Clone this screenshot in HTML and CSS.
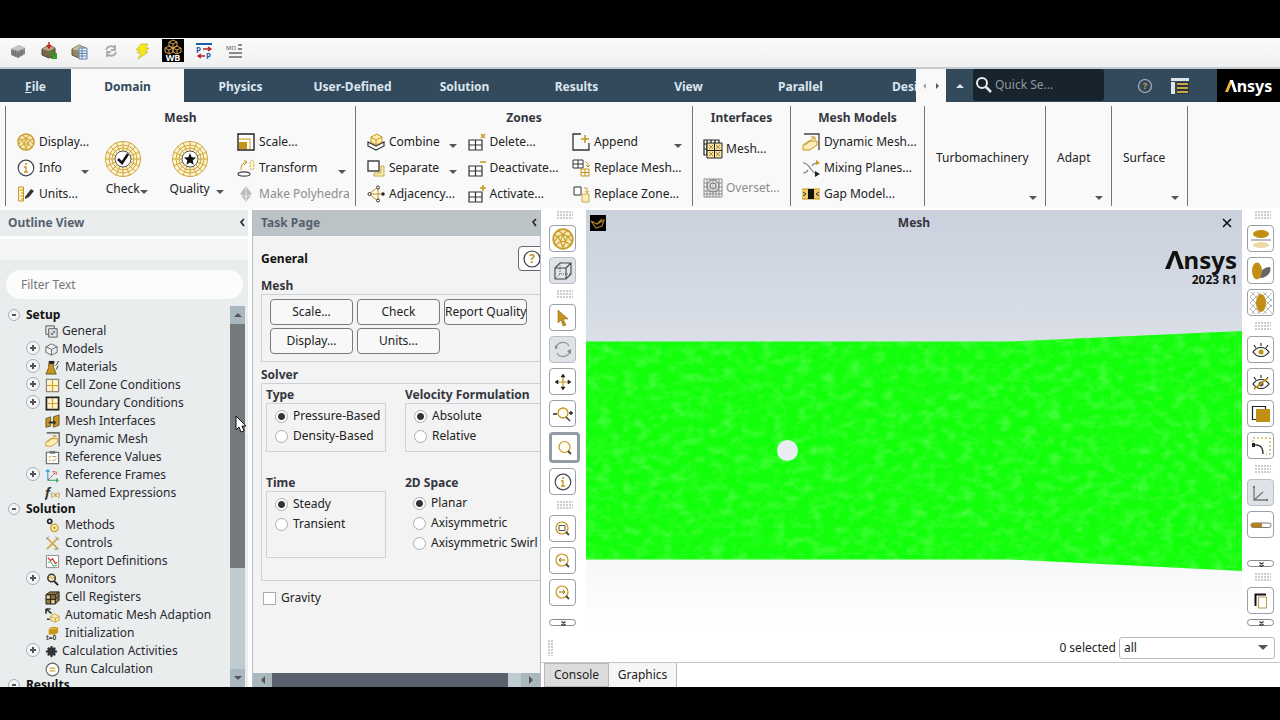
FILE: index.html
```html
<!DOCTYPE html>
<html lang="en">
<head>
<meta charset="utf-8">
<title>Fluent</title>
<link rel="stylesheet" href="styles.css">
</head>
<body>
<svg class="defs" aria-hidden="true">
  <defs>
    <symbol id="cube" viewBox="0 0 18 18"><path d="M2 7l8-4 6 3v6l-7 4-7-3z" fill="#8a8a8a"/><path d="M2 7l8-4 6 3-7 3z" fill="#c4c4c4"/><path d="M9 9v7M4.500 8v6M6.500 8.500v6.500M2 10l7 3 7-4M12 8v6" stroke="#666" fill="none" stroke-width=".7"/></symbol>
    <symbol id="cube-in" viewBox="0 0 18 18"><path d="M2 7l7-4 6 3v7l-6 3-7-3z" fill="#75684b" stroke="#4d4432"/><path d="M2 7l7-4 6 3-6 3z" fill="#b8aa80"/><path d="M9 0v5M7 3l2 3 2-3" stroke="#c22" stroke-width="1.500" fill="none"/><path d="M10 10l5 5M16 11v5h-5" stroke="#3a9d23" stroke-width="2" fill="none"/></symbol>
    <symbol id="cube-doc" viewBox="0 0 18 18"><path d="M1 7l7-4 7 3v7l-7 3-7-3z" fill="#938766" stroke="#5c543f"/><path d="M1 7l7-4 7 3-7 3z" fill="#c7bb92"/><path d="M8 6h8v11H8z" fill="#e8f1fa" stroke="#5c83ad"/><path d="M8 9h8M8 11.500h8M8 14h8M11 6v11" stroke="#5c83ad"/></symbol>
    <symbol id="refresh" viewBox="0 0 18 18"><path d="M4 8c1-4 6-5 9-2V3M13 3v5H9M14 10c-1 4-6 5-9 2v3M5 15v-5h4" stroke="#aaa" stroke-width="1.800" fill="none"/></symbol>
    <symbol id="bolt" viewBox="0 0 18 18"><path d="M8 2h7l-3 4h4l-4 4h3L5 17l3-6H4l3-3H3z" fill="#f5ea18" stroke="#b5ab22" stroke-width=".6"/></symbol>
    <symbol id="wb" viewBox="0 0 22 23"><path d="M0 0h22v23H0z" fill="#000"/><g stroke="#d8a14c" fill="none"><path d="M11 1l4 2v4l-4 2-4-2V3zM7 3l4 2 4-2M11 5v4M7 7l4 2v4l-4 2-4-2V9zM15 7l4 2v4l-4 2-4-2V9zM3 9l4 2 4-2 4 2 4-2M7 11v4M15 11v4"/></g><text x="11" y="22" text-anchor="middle" font-size="9" font-weight="700" fill="#fff">WB</text></symbol>
    <symbol id="pp" viewBox="0 0 18 18"><path d="M1 2h16" stroke="#1c5fae" stroke-width="2"/><path d="M8 7h8M13 5l3 2-3 2M10 14H3M6 12l-3 2 3 2" stroke="#b21f2d" stroke-width="1.300" fill="none"/><text x="1" y="11" font-size="8" font-weight="700" fill="#1c5fae">P</text><text x="11" y="17" font-size="8" font-weight="700" fill="#1c5fae">P</text></symbol>
    <symbol id="mo" viewBox="0 0 18 18"><text x="0" y="8" font-size="6" fill="#555">MO</text><path d="M12 3h4M12 7h4M3 11h13M3 15h13" stroke="#666" stroke-width="1.300"/></symbol>

    <symbol id="mesh-ball" viewBox="0 0 18 18"><circle cx="9" cy="9" r="8" fill="#f6e7b4" stroke="#c89b25" stroke-width="1.400"/><path d="M5 2l4 3 4-3M2 6l3 1 4-2 4 2 3-1M5 7L2 11M5 7l2 4 4 0 2-4 3 4M7 11l-4 3M7 11l2 5 2-5 4 3M9 5l-2 6M9 5l2 6" fill="none" stroke="#c89b25" stroke-width=".9"/></symbol>
    <symbol id="info" viewBox="0 0 18 18"><circle cx="9" cy="9" r="7.800" fill="#fff" stroke="#46494c" stroke-width="1.200"/><path d="M7 8h2v5M7 13h4" stroke="#c4961a" stroke-width="1.300" fill="none"/><circle cx="9" cy="5" r="1" fill="#c4961a"/></symbol>
    <symbol id="units" viewBox="0 0 18 18"><path d="M1.500 2h5v14h-5zM3 5h3M4 8h2M3 11h3M4 14h2" fill="#fff5cf" stroke="#c4961a"/><path d="M8 12l6-8 3 2-5 6-4 2z" fill="#333"/></symbol>
    <symbol id="wheel" viewBox="0 0 38 38"><g fill="none" stroke="#cfa63a" stroke-width="1"><circle cx="19" cy="19" r="17.500" fill="#fdf3cf"/><circle cx="19" cy="19" r="14"/><circle cx="19" cy="19" r="11"/><path d="M19 1v36M1 19h36M6.500 6.500l25 25M31.500 6.500l-25 25M12 2.500l14 33M26 2.500l-14 33M2.500 12l33 14M2.500 26l33-14"/></g><circle cx="19" cy="19" r="8" fill="#fff" stroke="#555"/></symbol>
    <symbol id="scale" viewBox="0 0 18 18"><path d="M1 1h16v16H1z" fill="#fff" stroke="#222" stroke-width="1.400"/><path d="M2 6h11v10" stroke="#d6b75e" fill="none" stroke-width="1.300"/><path d="M2 9h8v7H2z" fill="#c4961a"/></symbol>
    <symbol id="transform" viewBox="0 0 18 18"><ellipse cx="7" cy="15" rx="6" ry="2.200" fill="none" stroke="#444" stroke-width="1.200"/><path d="M4 11c0-4 1-7 5-8M7 1l3 2-3 3" stroke="#c4961a" fill="none"/><ellipse cx="15" cy="6" rx="2" ry="5" fill="#fff5cf" stroke="#c9a84a" stroke-dasharray="2 1"/></symbol>
    <symbol id="poly" viewBox="0 0 18 18"><path d="M9 1l6 8-6 8-6-8z" fill="#b8b8b8"/><path d="M9 1v16M3 9l6 3 6-3" stroke="#eee" fill="none"/></symbol>
    <symbol id="combine" viewBox="0 0 18 18"><path d="M1 9l8 4 8-4v4l-8 4-8-4z" fill="#fff" stroke="#333" stroke-width="1.200"/><path d="M4 4l6-3 5 3v5l-6 3-5-3z" fill="#fcedb8" stroke="#c4961a"/><path d="M4 4l5 3 6-3M9 7v5" stroke="#c4961a" fill="none"/></symbol>
    <symbol id="separate" viewBox="0 0 18 18"><path d="M1 2h11v10H1z" fill="#fff" stroke="#444" stroke-width="1.400"/><path d="M14 7h3v10H7v-3h7z" fill="#fcedb8" stroke="#c9a84a"/></symbol>
    <symbol id="adjacency" viewBox="0 0 18 18"><path d="M2 9l9-7M2 9l9 7M11 2v14M2 9h14" stroke="#c4961a" fill="none"/><g fill="#fff" stroke="#333"><circle cx="11" cy="2.500" r="1.500"/><circle cx="2.500" cy="9" r="1.500"/><circle cx="11" cy="15.500" r="1.500"/></g><circle cx="16" cy="9" r="1.700" fill="#222"/></symbol>
    <symbol id="grid-x" viewBox="0 0 18 18"><path d="M1 7h13v10H1zM1 12h13M7.500 7v10" fill="#fff" stroke="#333" stroke-width="1.200"/><path d="M13 1l4 4M17 1l-4 4" stroke="#c4961a" stroke-width="1.500"/></symbol>
    <symbol id="grid-minus" viewBox="0 0 18 18"><path d="M1 7h13v10H1zM1 12h13M7.500 7v10" fill="#fff" stroke="#333" stroke-width="1.200"/><path d="M12 3h6" stroke="#c4961a" stroke-width="1.500"/></symbol>
    <symbol id="grid-plus" viewBox="0 0 18 18"><path d="M1 7h13v10H1zM1 12h13M7.500 7v10" fill="#fff" stroke="#333" stroke-width="1.200"/><path d="M12 3h6M15 0v6" stroke="#c4961a" stroke-width="1.500"/></symbol>
    <symbol id="append" viewBox="0 0 18 18"><path d="M9 1H1v16h16v-7" fill="none" stroke="#333" stroke-width="1.300"/><path d="M9 6h8M13 2v8" stroke="#c4961a" stroke-width="1.500"/></symbol>
    <symbol id="rep-mesh" viewBox="0 0 18 18"><path d="M1 1h10v8H1zM1 5h10M6 1v8" fill="#fff" stroke="#333"/><path d="M9 10h8v7H9zM9 13.500h8M13 10v7M13 3c3 0 3 2 3 4M14 6l2 2 2-2" fill="none" stroke="#c4961a"/></symbol>
    <symbol id="rep-zone" viewBox="0 0 18 18"><path d="M2 2h7v8H2z" fill="#fff" stroke="#333"/><path d="M10 9h7v8h-7zM12 3h3v5M13 6l2 2 2-2" fill="#fcedb8" stroke="#cba74a"/></symbol>
    <symbol id="if-mesh" viewBox="0 0 20 20"><path d="M1 1h15v15H1zM4 1v15M8 1v15M12 1v15M1 5h15M1 10h15" fill="none" stroke="#222" stroke-width="1.200"/><path d="M4 4h15v15H4z" fill="#f7e4a2" stroke="#222"/><path d="M4 11.500h15M11.500 4v15" stroke="#222"/><path d="M6 6l4 4M10 6l-4 4M13 6l4 4M17 6l-4 4M6 13l4 4M10 13l-4 4M13 13l4 4M17 13l-4 4" stroke="#a98a40"/></symbol>
    <symbol id="overset" viewBox="0 0 20 20"><path d="M1 1h18v18H1zM4 1v18M7 1v18M10 1v18M13 1v18M16 1v18M1 5h18M1 9h18M1 13h18M1 16h18" fill="none" stroke="#8b8b8b"/><circle cx="10" cy="8" r="6" fill="#ddd" fill-opacity=".6" stroke="#777"/><circle cx="10" cy="8" r="3" fill="none" stroke="#777"/></symbol>
    <symbol id="dynmesh" viewBox="0 0 18 18"><path d="M2 1h15v16" fill="none" stroke="#444" stroke-width="1.300"/><path d="M1 17v-5l6-4h8v4l-7 5zM3 12l9-7M9 4h4v3" fill="#fcedb8" stroke="#c4961a"/></symbol>
    <symbol id="mixing" viewBox="0 0 18 18"><path d="M1 4c8 0 7 11 15 11M1 14c3 0 4-1 5-3M10 7c1-2 3-3 6-3" stroke="#777" stroke-width="1.100" fill="none"/><path d="M14 1l4 3-4 2z" fill="#c4961a"/><path d="M13 12l5 3-5 3z" fill="#222"/></symbol>
    <symbol id="gap" viewBox="0 0 18 18"><path d="M0 4h18v10H0z" fill="#edcc6c"/><path d="M0 4h18M0 14h18" stroke="#c4961a"/><path d="M6 4h6v10H6z" fill="#111"/><path d="M1 7l3 2-3 2M17 7l-3 2 3 2" stroke="#333" fill="none"/></symbol>

    <symbol id="t-general" viewBox="0 0 16 16"><path d="M2 2h9v9H2z" fill="#e6e9ea" stroke="#555"/><path d="M5 5h9v9H5z" fill="#e6e9ea" stroke="#555"/><path d="M7 12l5-5M7 9l3 3M9 7l3 3" stroke="#666"/></symbol>
    <symbol id="t-models" viewBox="0 0 16 16"><path d="M2 5l6-3 6 3v6l-6 3-6-3zM2 5l6 3 6-3M8 8v6" fill="#eef0f1" stroke="#666"/></symbol>
    <symbol id="t-materials" viewBox="0 0 16 16"><path d="M1 15l3-7V4h5v4l3 7z" fill="#c4961a" stroke="#6b5a2a"/><path d="M4 1h6v3H4z" fill="#222"/><path d="M11 6l3-3M14 6l-2 4M13 2h2" stroke="#333"/></symbol>
    <symbol id="t-cell" viewBox="0 0 16 16"><path d="M1.500 1.500h13v13h-13z" fill="#fff3c9" stroke="#888" stroke-width="1.300"/><path d="M8 2v12M2 8h12" stroke="#d0a32e" stroke-width="1.300"/></symbol>
    <symbol id="t-boundary" viewBox="0 0 16 16"><path d="M1.500 1.500h13v13h-13z" fill="#fff3c9" stroke="#222" stroke-width="1.800"/><path d="M8 2v12M2 8h12" stroke="#d0a32e" stroke-width="1.300"/></symbol>
    <symbol id="t-interfaces" viewBox="0 0 16 16"><path d="M1 5l5-2v10l-5 1zM9 3l6-2v11l-6 2z" fill="#c4961a" stroke="#6b5a2a"/><path d="M4 8h5V6l3 3-3 3v-2H4z" fill="#333"/></symbol>
    <symbol id="t-refvalues" viewBox="0 0 16 16"><path d="M1.500 2.500h13v12h-13z" fill="#fff" stroke="#777" stroke-width="1.400"/><path d="M5 1h6v3H5z" fill="#777"/><path d="M4 7l1 1 2-2M8 7h4M8 11l1 1 3-3M4 11h2" stroke="#b4923a" fill="none"/></symbol>
    <symbol id="t-frames" viewBox="0 0 16 16"><path d="M3 13V2M1 4l2-2 2 2" stroke="#2aa7d8" fill="none" stroke-width="1.200"/><path d="M3 13l8-8M8 4h4v4" stroke="#c33" fill="none" stroke-dasharray="3 1"/><path d="M3 13h11M12 11l2 2-2 2" stroke="#2da44e" fill="none" stroke-width="1.200"/></symbol>
    <symbol id="t-fx" viewBox="0 0 16 16"><text x="0" y="12" font-size="14" font-style="italic" font-weight="700" fill="#333">f</text><text x="6" y="12" font-size="8" font-weight="700" fill="#c9a23c">(x)</text></symbol>
    <symbol id="t-methods" viewBox="0 0 16 16"><circle cx="5" cy="3.500" r="2.200" fill="none" stroke="#222" stroke-width="1.800"/><circle cx="10" cy="10.500" r="4" fill="#fbe9ae" stroke="#cda337" stroke-width="1.500"/><circle cx="10" cy="10.500" r="1.300" fill="#c4961a"/></symbol>
    <symbol id="t-controls" viewBox="0 0 16 16"><path d="M2 2l12 12M14 2L2 14" stroke="#d0ad55" stroke-width="2"/><path d="M1 3l3-2M11 1l4 3M10 14l4 0" stroke="#888"/></symbol>
    <symbol id="t-report" viewBox="0 0 16 16"><path d="M1.500 1.500h13v13h-13z" fill="#fff" stroke="#888"/><path d="M3 4l3 3 2-2 3 5 2-1" stroke="#c33" stroke-width="1.300" fill="none"/><path d="M3 9l3-1 3 5 4-1" stroke="#3a9d50" fill="none"/></symbol>
    <symbol id="t-monitors" viewBox="0 0 16 16"><circle cx="7" cy="6.500" r="4" fill="#f5e6b6" stroke="#333" stroke-width="1.600"/><path d="M10 10l4 4" stroke="#222" stroke-width="2"/><path d="M4 7l2-2 2 2 2-2" stroke="#c4961a" fill="none"/></symbol>
    <symbol id="t-registers" viewBox="0 0 16 16"><path d="M1 5l4-3h10v9l-4 4H1z" fill="#8e7740" stroke="#222"/><path d="M1 5h10v10M11 5l4-3M6 5v10M1 10h10l4-4" stroke="#222" fill="none"/><path d="M2 6h3v3H2zM7 11h3v3H7z" fill="#eedb9d"/></symbol>
    <symbol id="t-adapt" viewBox="0 0 16 16"><path d="M1 1h5M1 1v5M1 1l6 5M2 12h3" stroke="#333" stroke-width="1.700"/><path d="M6 9l4-3 5 3v4l-4 2-5-2zM6 9l5 2 4-2M11 11v4" fill="#fbe9ae" stroke="#cda337"/></symbol>
    <symbol id="t-init" viewBox="0 0 16 16"><path d="M4 3l3-2h7v6l-3 2H4z" fill="#c4961a"/><path d="M4 3h7l3-2" stroke="#f0ce6b" fill="none"/><text x="1" y="15" font-size="7" font-weight="700" fill="#444">t=0</text></symbol>
    <symbol id="t-calc" viewBox="0 0 16 16"><circle cx="8" cy="8" r="4.500" fill="#333"/><path d="M8 2v12M2 8h12M4 4l8 8M12 4l-8 8" stroke="#333" stroke-width="2"/></symbol>
    <symbol id="t-run" viewBox="0 0 16 16"><circle cx="8" cy="8" r="6.800" fill="#fff" stroke="#666" stroke-width="1.200"/><path d="M5 6.500h6M5 9.500h6" stroke="#d0a32e" stroke-width="1.400"/></symbol>

    <symbol id="v-box" viewBox="0 0 18 18"><path d="M1 6l5-5h11v11l-5 5H1zM1 6h11v11M12 6l5-5" fill="#e4e6e9" stroke="#444" stroke-width="1.100"/><path d="M6 1v11h11M6 12l-5 5" stroke="#555" stroke-dasharray="1 1" fill="none"/></symbol>
    <symbol id="v-pointer" viewBox="0 0 18 18"><path d="M4 1l10 9-5 0 3 6-3 1-2-6-3 3z" fill="#c4961a" stroke="#8a6a1d" stroke-width=".6"/></symbol>
    <symbol id="v-rotate" viewBox="0 0 18 18"><path d="M2 7a7 7 0 0 1 13-2M3 12a7 7 0 0 0 13-3" fill="none" stroke="#999" stroke-width="1.400"/><path d="M1 8V4l3 3zM17 8v5l-4-3z" fill="#888"/></symbol>
    <symbol id="v-pan" viewBox="0 0 18 18"><path d="M9 3v12M3 9h12" stroke="#c4961a" stroke-width="1.200"/><path d="M9 1l2 3h-4zM9 17l2-3h-4zM1 9l3-2v4zM17 9l-3-2v4z" fill="#222" stroke="#222" stroke-width=".6"/></symbol>
    <symbol id="v-zoompm" viewBox="0 0 22 18"><circle cx="11" cy="8" r="5" fill="#fffdf3" stroke="#c4961a" stroke-width="1.300"/><path d="M14 12l4 4" stroke="#444" stroke-width="1.600"/><path d="M1 9h4M17 8h4M19 6v4" stroke="#222" stroke-width="1.300"/></symbol>
    <symbol id="v-zoom" viewBox="0 0 18 18"><circle cx="8.500" cy="8" r="5.500" fill="#fffdf3" stroke="#c4961a" stroke-width="1.200"/><path d="M12 12l3 3" stroke="#444" stroke-width="1.800"/></symbol>
    <symbol id="v-zoomfit" viewBox="0 0 18 18"><circle cx="8" cy="8" r="6" fill="#fffdf3" stroke="#c4961a" stroke-width="1.200"/><path d="M12 12l3 3" stroke="#444" stroke-width="1.800"/><path d="M5 5.500h6v5H5z" fill="none" stroke="#555"/></symbol>
    <symbol id="v-zoomprev" viewBox="0 0 18 18"><circle cx="8" cy="8" r="6" fill="#fffdf3" stroke="#c4961a" stroke-width="1.200"/><path d="M12 12l3 3" stroke="#444" stroke-width="1.800"/><path d="M11 8H5M7 6L5 8l2 2" fill="none" stroke="#8a6a1d"/></symbol>
    <symbol id="v-zoomnext" viewBox="0 0 18 18"><circle cx="8" cy="8" r="6" fill="#fffdf3" stroke="#c4961a" stroke-width="1.200"/><path d="M12 12l3 3" stroke="#444" stroke-width="1.800"/><path d="M5 8h6M9 6l2 2-2 2" fill="none" stroke="#8a6a1d"/></symbol>
    <symbol id="v-mirror" viewBox="0 0 22 22"><ellipse cx="11" cy="6" rx="8" ry="4" fill="#c08f14"/><path d="M1 12h20" stroke="#777"/><ellipse cx="11" cy="17" rx="8" ry="3" fill="#ecd9a5"/></symbol>
    <symbol id="v-shadow" viewBox="0 0 22 22"><path d="M10 18c-2-5 3-11 10-11 2 4-2 11-10 11z" fill="#666"/><ellipse cx="7" cy="11" rx="5" ry="8.500" fill="#c08f14"/></symbol>
    <symbol id="v-hatch" viewBox="0 0 22 22"><path d="M0 5l5-5M0 11L11 0M0 17L17 0M1 22L22 1M7 22L22 7M13 22l9-9M0 17l5 5M0 11l11 11M0 5l17 17M1 0l21 21M7 0l15 15M13 0l9 9" stroke="#aaa" stroke-width=".8"/><ellipse cx="11" cy="11" rx="5" ry="9" fill="#c08f14"/></symbol>
    <symbol id="v-eye" viewBox="0 0 22 22"><path d="M3 13c4-6 12-6 16 0-4 6-12 6-16 0z" fill="#fff" stroke="#222" stroke-width="1.200"/><circle cx="11" cy="13" r="2.500" fill="#c08f14"/><path d="M11 4v3M4 6l2 3M18 6l-2 3" stroke="#222" stroke-width="1.100"/></symbol>
    <symbol id="v-noeye" viewBox="0 0 22 22"><path d="M3 13c4-6 12-6 16 0-4 6-12 6-16 0z" fill="#fff" stroke="#222" stroke-width="1.200"/><circle cx="11" cy="13" r="2.500" fill="#555"/><path d="M11 4v3M4 6l2 3M18 6l-2 3" stroke="#222" stroke-width="1.100"/><path d="M4 18L18 7" stroke="#c08f14" stroke-width="1.600"/></symbol>
    <symbol id="v-squares" viewBox="0 0 22 22"><path d="M2.500 3.500h13v13h-13z" fill="#fff" stroke="#222" stroke-width="1.200"/><path d="M6 6h14v13H6z" fill="#c08f14"/></symbol>
    <symbol id="v-curve" viewBox="0 0 22 22"><path d="M3 7V3h17v16h-4" fill="none" stroke="#c08f14" stroke-dasharray="2 2"/><path d="M3 10c7-1 10 2 10 9" fill="none" stroke="#222" stroke-width="1.300"/><path d="M2 8h3v4H2z" fill="#222"/></symbol>
    <symbol id="v-axes" viewBox="0 0 22 22"><path d="M4 5v13h13M4 18l9-8" fill="none" stroke="#777" stroke-width="1.300"/><circle cx="4" cy="5" r="1.200" fill="#777"/><circle cx="17" cy="18" r="1.200" fill="#777"/></symbol>
    <symbol id="v-slider" viewBox="0 0 22 22"><rect x="1" y="9" width="20" height="4.500" rx="2.200" fill="#fff" stroke="#777"/><path d="M3 9h9v4.500H3a2 2 0 0 1 0-4.500z" fill="#b08224"/></symbol>
    <symbol id="v-copy" viewBox="0 0 22 22"><path d="M5.500 16V4.500H16" fill="none" stroke="#111" stroke-width="2"/><path d="M8.500 7h8v11h-8z" fill="#fff" stroke="#b59a50"/></symbol>
    <symbol id="pill" viewBox="0 0 27 7"><path d="M11.500 1.500l2 1.500 2-1.500M11.500 4l2 1.500 2-1.500" fill="none" stroke="#333" stroke-width="1.300"/></symbol>
  </defs>
</svg>

<div class="app">
  <div class="quickbar">
    <button aria-label="Open"><svg><use href="#cube"/></svg></button>
    <button aria-label="Import"><svg><use href="#cube-in"/></svg></button>
    <button aria-label="Case data"><svg><use href="#cube-doc"/></svg></button>
    <button aria-label="Reload"><svg><use href="#refresh"/></svg></button>
    <button aria-label="Quick run"><svg><use href="#bolt"/></svg></button>
    <button class="wb" aria-label="Workbench"><svg><use href="#wb"/></svg></button>
    <button aria-label="Parameters"><svg><use href="#pp"/></svg></button>
    <button aria-label="Monitor"><svg><use href="#mo"/></svg></button>
  </div>

  <nav class="tabbar">
    <div class="tabs">
      <button class="tab tab-file"><u>F</u>ile</button>
      <button class="tab tab-active">Domain</button>
      <button class="tab">Physics</button>
      <button class="tab">User-Defined</button>
      <button class="tab">Solution</button>
      <button class="tab">Results</button>
      <button class="tab">View</button>
      <button class="tab">Parallel</button>
      <button class="tab">Design</button>
    </div>
    <div class="tab-scroll">
      <button class="arrow left dim" aria-label="Previous tabs"></button>
      <button class="arrow right" aria-label="More tabs"></button>
    </div>
    <button class="collapse" aria-label="Collapse ribbon"><span class="arrow up"></span></button>
    <label class="search">
      <svg viewBox="0 0 18 18"><circle cx="7" cy="7" r="5" fill="none" stroke="#e8edf0" stroke-width="2"/><path d="M11 11l5 5" stroke="#e8edf0" stroke-width="2.500"/></svg>
      <input type="text" placeholder="Quick Se..." aria-label="Quick search">
    </label>
    <div class="tab-tools">
      <button aria-label="Help"><svg viewBox="0 0 18 18"><circle cx="9" cy="9" r="6.500" fill="none" stroke="#a9b4bd" stroke-width="1.200"/><text x="9" y="12" text-anchor="middle" font-size="9" font-weight="700" fill="#c9a23c">?</text></svg></button>
      <button aria-label="Layout"><svg viewBox="0 0 18 18"><path d="M0 1h18v3H0zM0 5h4v12H0z" fill="#dfe6ea"/><path d="M6 5h12v12H6z" fill="#27343f"/><path d="M6 7h11M6 11h11M6 15h11" stroke="#c9a83f" stroke-width="2"/></svg></button>
    </div>
    <div class="brand"><svg viewBox="0 0 12 12"><path d="M0 12L5 0h3L3 12z" fill="#f5b82e"/><path d="M5 0h3l4 12H9z" fill="#fff"/></svg>nsys</div>
  </nav>

  <div class="ribbon">
    <section class="group g-mesh">
      <h2>Mesh</h2>
      <div class="cols">
        <div class="col">
          <button class="cmd"><svg><use href="#mesh-ball"/></svg>Display...</button>
          <button class="cmd"><svg><use href="#info"/></svg>Info<i class="arrow down"></i></button>
          <button class="cmd"><svg><use href="#units"/></svg>Units...</button>
        </div>
        <button class="big"><svg viewBox="0 0 38 38"><use href="#wheel" width="38" height="38"/><path d="M14 19l4 4 6-9" fill="none" stroke="#111" stroke-width="2.500"/></svg><span>Check<i class="arrow down"></i></span></button>
        <button class="big"><svg viewBox="0 0 38 38"><use href="#wheel" width="38" height="38"/><path d="M19 13l1.700 4.200 4.300.3-3.300 2.900 1 4.400-3.700-2.300-3.700 2.300 1-4.400-3.300-2.900 4.300-.3z" fill="#111"/></svg><span>Quality<i class="arrow down far"></i></span></button>
        <div class="col col-wide">
          <button class="cmd"><svg><use href="#scale"/></svg>Scale...</button>
          <button class="cmd"><svg><use href="#transform"/></svg>Transform<i class="arrow down"></i></button>
          <button class="cmd off" disabled><svg><use href="#poly"/></svg>Make Polyhedra</button>
        </div>
      </div>
    </section>
    <section class="group g-zones">
      <h2>Zones</h2>
      <div class="cols">
        <div class="col">
          <button class="cmd"><svg><use href="#combine"/></svg>Combine<i class="arrow down"></i></button>
          <button class="cmd"><svg><use href="#separate"/></svg>Separate<i class="arrow down"></i></button>
          <button class="cmd"><svg><use href="#adjacency"/></svg>Adjacency...</button>
        </div>
        <div class="col">
          <button class="cmd"><svg><use href="#grid-x"/></svg>Delete...</button>
          <button class="cmd"><svg><use href="#grid-minus"/></svg>Deactivate...</button>
          <button class="cmd"><svg><use href="#grid-plus"/></svg>Activate...</button>
        </div>
        <div class="col">
          <button class="cmd"><svg><use href="#append"/></svg>Append<i class="arrow down"></i></button>
          <button class="cmd"><svg><use href="#rep-mesh"/></svg>Replace Mesh...</button>
          <button class="cmd"><svg><use href="#rep-zone"/></svg>Replace Zone...</button>
        </div>
      </div>
    </section>
    <section class="group g-interfaces">
      <h2>Interfaces</h2>
      <div class="col two">
        <button class="cmd"><svg><use href="#if-mesh"/></svg>Mesh...</button>
        <button class="cmd off" disabled><svg><use href="#overset"/></svg>Overset...</button>
      </div>
    </section>
    <section class="group g-models">
      <h2>Mesh Models</h2>
      <div class="col">
        <button class="cmd"><svg><use href="#dynmesh"/></svg>Dynamic Mesh...</button>
        <button class="cmd"><svg><use href="#mixing"/></svg>Mixing Planes...</button>
        <button class="cmd"><svg><use href="#gap"/></svg>Gap Model...</button>
      </div>
    </section>
    <button class="group menu g-turbo">Turbomachinery<i class="arrow down"></i></button>
    <button class="group menu g-adapt">Adapt<i class="arrow down"></i></button>
    <button class="group menu g-surface">Surface<i class="arrow down"></i></button>
    <div class="group rest"></div>
  </div>

  <main class="work">
    <aside class="outline">
      <header class="panel-head">Outline View<button class="chev" aria-label="Collapse outline"><svg viewBox="0 0 8 10"><path d="M6 1L3 4l3 4" fill="none" stroke="#222" stroke-width="1.600"/></svg></button></header>
      <div class="strip"></div>
      <input class="filter" type="text" placeholder="Filter Text" aria-label="Filter Text">
      <div class="tree-area">
        <ul class="tree">
          <li class="top"><button class="exp minus" aria-label="Collapse"></button>Setup</li>
          <li class="tight"><svg><use href="#t-general"/></svg>General</li>
          <li class="tight"><button class="exp plus" aria-label="Expand"></button><svg><use href="#t-models"/></svg>Models</li>
          <li><button class="exp plus" aria-label="Expand"></button><svg><use href="#t-materials"/></svg>Materials</li>
          <li><button class="exp plus" aria-label="Expand"></button><svg><use href="#t-cell"/></svg>Cell Zone Conditions</li>
          <li><button class="exp plus" aria-label="Expand"></button><svg><use href="#t-boundary"/></svg>Boundary Conditions</li>
          <li><svg><use href="#t-interfaces"/></svg>Mesh Interfaces</li>
          <li><svg><use href="#dynmesh"/></svg>Dynamic Mesh</li>
          <li><svg><use href="#t-refvalues"/></svg>Reference Values</li>
          <li><button class="exp plus" aria-label="Expand"></button><svg><use href="#t-frames"/></svg>Reference Frames</li>
          <li><svg><use href="#t-fx"/></svg>Named Expressions</li>
          <li class="top"><button class="exp minus" aria-label="Collapse"></button>Solution</li>
          <li><svg><use href="#t-methods"/></svg>Methods</li>
          <li><svg><use href="#t-controls"/></svg>Controls</li>
          <li><svg><use href="#t-report"/></svg>Report Definitions</li>
          <li><button class="exp plus" aria-label="Expand"></button><svg><use href="#t-monitors"/></svg>Monitors</li>
          <li><svg><use href="#t-registers"/></svg>Cell Registers</li>
          <li><svg><use href="#t-adapt"/></svg>Automatic Mesh Adaption</li>
          <li><svg><use href="#t-init"/></svg>Initialization</li>
          <li class="tight"><button class="exp plus" aria-label="Expand"></button><svg><use href="#t-calc"/></svg>Calculation Activities</li>
          <li><svg><use href="#t-run"/></svg>Run Calculation</li>
          <li class="top"><button class="exp minus" aria-label="Collapse"></button>Results</li>
        </ul>
        <div class="vscroll"><span class="sbtn"><i class="arrow up"></i></span><span class="thumb"></span><span class="track"></span><span class="sbtn"><i class="arrow down"></i></span></div>
      </div>
      <svg class="pointer" viewBox="0 0 12 18"><path d="M1 1v14l3-3 2 5 3-1-2-5h4z" fill="#fff" stroke="#111"/></svg>
    </aside>

    <section class="task">
      <header class="panel-head">Task Page<button class="chev" aria-label="Collapse task page"><svg viewBox="0 0 8 10"><path d="M6 1L3 4l3 4" fill="none" stroke="#222" stroke-width="1.600"/></svg></button></header>
      <div class="task-body">
        <div class="task-title"><h1>General</h1><button class="help" aria-label="Help"><svg viewBox="0 0 18 18"><circle cx="9" cy="9" r="8" fill="#fff" stroke="#333" stroke-width="1.200"/><text x="9" y="13" text-anchor="middle" font-size="12" font-weight="700" fill="#c4961a">?</text></svg></button></div>
        <h3>Mesh</h3>
        <div class="box buttons">
          <button>Scale...</button><button>Check</button><button>Report Quality</button>
          <button>Display...</button><button>Units...</button>
        </div>
        <h3 class="h-solver">Solver</h3>
        <div class="box solver">
          <div class="opt" role="radiogroup" aria-label="Type"><h4>Type</h4><div class="box radios">
            <label><input type="radio" name="type" checked>Pressure-Based</label>
            <label><input type="radio" name="type">Density-Based</label></div></div>
          <div class="opt" role="radiogroup" aria-label="Velocity Formulation"><h4>Velocity Formulation</h4><div class="box radios">
            <label><input type="radio" name="vel" checked>Absolute</label>
            <label><input type="radio" name="vel">Relative</label></div></div>
          <div class="opt" role="radiogroup" aria-label="Time"><h4>Time</h4><div class="box radios tall">
            <label><input type="radio" name="time" checked>Steady</label>
            <label><input type="radio" name="time">Transient</label></div></div>
          <div class="opt" role="radiogroup" aria-label="2D Space"><h4>2D Space</h4><div class="box radios bare">
            <label><input type="radio" name="space" checked>Planar</label>
            <label><input type="radio" name="space">Axisymmetric</label>
            <label><input type="radio" name="space">Axisymmetric Swirl</label></div></div>
        </div>
        <label class="gravity"><input type="checkbox">Gravity</label>
      </div>
      <div class="hscroll"><span class="sbtn"><i class="arrow left"></i></span><span class="thumb"></span><span class="track"></span><span class="sbtn"><i class="arrow right"></i></span></div>
    </section>

    <section class="viewer">
      <div class="stage">
        <div class="tools">
          <span class="grip"></span>
          <button aria-label="Display mesh"><svg class="large"><use href="#mesh-ball"/></svg></button>
          <button class="on" aria-label="Box"><svg><use href="#v-box"/></svg></button>
          <span class="grip"></span>
          <button aria-label="Select"><svg><use href="#v-pointer"/></svg></button>
          <button class="on" aria-label="Rotate"><svg><use href="#v-rotate"/></svg></button>
          <button aria-label="Pan"><svg><use href="#v-pan"/></svg></button>
          <button aria-label="Zoom in or out"><svg class="large"><use href="#v-zoompm"/></svg></button>
          <button class="current" aria-label="Zoom to area"><svg><use href="#v-zoom"/></svg></button>
          <button aria-label="Probe"><svg><use href="#info"/></svg></button>
          <span class="grip"></span>
          <button aria-label="Fit"><svg><use href="#v-zoomfit"/></svg></button>
          <button aria-label="Last view"><svg><use href="#v-zoomprev"/></svg></button>
          <button aria-label="Next view"><svg><use href="#v-zoomnext"/></svg></button>
          <button class="pill last" aria-label="More"><svg><use href="#pill"/></svg></button>
        </div>

        <div class="canvas">
          <svg class="plot" viewBox="0 0 656 418" preserveAspectRatio="none">
            <defs>
              <filter id="grain" x="0" y="0" width="100%" height="100%" color-interpolation-filters="sRGB">
                <feTurbulence type="fractalNoise" baseFrequency="0.08 0.11" numOctaves="4" seed="4" result="n"/>
                <feColorMatrix in="n" type="matrix" values="0 0 0 0 .5  0 0 0 0 1  0 0 0 0 .47  1 0 0 0 -.42" result="m"/>
                <feComposite in="m" in2="SourceGraphic" operator="in" result="c"/>
                <feMerge><feMergeNode in="SourceGraphic"/><feMergeNode in="c"/></feMerge>
              </filter>
            </defs>
            <path d="M0 131.500H424L656 121V361L424 349.500H0z" fill="#12fe0a" filter="url(#grain)"/>
            <ellipse cx="201.500" cy="240.500" rx="10.500" ry="10.500" fill="#e9edf1"/>
          </svg>
          <header class="canvas-head">
            <svg viewBox="0 0 16 16"><path d="M0 0h16v16H0z" fill="#000"/><path d="M1 6l6 3 7-4-2 6-6 2zM7 9l5-5" fill="none" stroke="#a87e2b" stroke-width="1.200"/></svg>
            <h2>Mesh</h2>
            <button aria-label="Close"><svg viewBox="0 0 10 10"><path d="M1 1l8 8M9 1L1 9" stroke="#111" stroke-width="1.600"/></svg></button>
          </header>
          <div class="logo">
            <div class="logo-name"><svg viewBox="0 0 20 19"><path d="M0 19L8 0h4L5 19z"/><path d="M9 0h4l7 19h-5z"/></svg>nsys</div>
            <div class="logo-ver">2023 R1</div>
          </div>
        </div>

        <div class="tools tools-right">
          <span class="grip"></span>
          <button aria-label="Mirror"><svg class="large"><use href="#v-mirror"/></svg></button>
          <button aria-label="Shadow"><svg class="large"><use href="#v-shadow"/></svg></button>
          <button aria-label="Transparency"><svg class="large"><use href="#v-hatch"/></svg></button>
          <span class="grip"></span>
          <button aria-label="Show"><svg class="large"><use href="#v-eye"/></svg></button>
          <button aria-label="Hide"><svg class="large"><use href="#v-noeye"/></svg></button>
          <button aria-label="Surfaces"><svg class="large"><use href="#v-squares"/></svg></button>
          <button aria-label="Edges"><svg class="large"><use href="#v-curve"/></svg></button>
          <span class="grip"></span>
          <button class="on" aria-label="Axes"><svg class="large"><use href="#v-axes"/></svg></button>
          <button aria-label="Colormap"><svg class="large"><use href="#v-slider"/></svg></button>
          <button class="pill mid" aria-label="More"><svg><use href="#pill"/></svg></button>
          <span class="grip"></span>
          <button aria-label="Copy"><svg class="large"><use href="#v-copy"/></svg></button>
          <button class="pill" aria-label="More"><svg><use href="#pill"/></svg></button>
        </div>
      </div>
      <div class="status">
        <span class="vgrip"></span>
        <label for="sel">0 selected</label>
        <div class="select"><select id="sel"><option>all</option></select><i class="arrow down"></i></div>
      </div>
      <div class="bottom-tabs"><button>Console</button><button class="active">Graphics</button></div>
    </section>
  </main>
</div>
</body>
</html>
```
FILE: styles.css
```css
* { box-sizing: border-box; }
body {
  margin: 0;
  background: #000;
  font: 12px/16px "Noto Sans", "Open Sans", sans-serif;
  color: #222;
}
button, input, select { font: inherit; color: inherit; margin: 0; }
button { background: none; border: 0; padding: 0; white-space: nowrap; }
h1, h2, h3, h4 { margin: 0; font-size: 12px; font-weight: 700; color: #34363f; }
svg { display: block; flex: none; }
.defs { position: absolute; width: 0; height: 0; }

.app {
  height: 100vh;
  padding: 38px 0 33px;
  display: flex;
  flex-direction: column;
  overflow: hidden;
}

/* Arrow glyphs */
.arrow { display: block; flex: none; width: 0; height: 0; border: 4px solid transparent; color: #555; }
.arrow.down { border-top-color: currentColor; border-bottom: 0; }
.arrow.up { border-bottom-color: currentColor; border-top: 0; }
.arrow.left { border-right-color: currentColor; border-left: 0; }
.arrow.right { border-left-color: currentColor; border-right: 0; }
.arrow.dim { color: #aaa; }

/* Quick access bar */
.quickbar {
  flex: none;
  height: 31px;
  padding: 0 9px 4px;
  display: flex;
  align-items: center;
  gap: 13px;
  background: linear-gradient(#fafafa, #f0f0f0);
  border-bottom: 2px solid #c3cad0;
}
.quickbar svg { width: 18px; height: 18px; }
.quickbar .wb svg { width: 22px; height: 23px; }
.quickbar .wb { margin: 0 -2px; }

/* Tab bar */
.tabbar { flex: none; display: flex; height: 33px; background: #33495c; }
.tabs { flex: 1; min-width: 0; display: flex; overflow: hidden; }
.tab { flex: 0 0 112px; color: #dbe6ef; font-weight: 700; padding: 3px 0 0 1px; }
.tab-file { flex-basis: 71px; padding-left: 0; }
.tab-active { flex-basis: 113px; padding-left: 0; background: #f9f9f9; color: #33495c; }
.tab-scroll { flex: 0 0 30px; display: flex; align-items: center; justify-content: center; gap: 10px; background: #f9f9f9; }
.tab-scroll .arrow { border-width: 3px; }
.tab-scroll .left { border-left: 0; }
.tab-scroll .right { border-right: 0; }
.collapse { flex: 0 0 27px; display: grid; place-items: center; }
.collapse .arrow { color: #dbe6ef; }
.search {
  flex: 0 0 131px;
  display: flex;
  align-items: center;
  gap: 2px;
  padding-left: 2px;
  margin-bottom: 1px;
  background: #18232c;
  border-radius: 3px;
}
.search svg { width: 18px; height: 18px; }
.search input { width: 90px; border: 0; padding: 0; background: none; color: #dbe6ef; }
.search input::placeholder { color: #8f989e; opacity: 1; }
.tab-tools { flex: 0 0 113px; display: flex; align-items: center; justify-content: flex-end; gap: 17px; padding-right: 28px; }
.tab-tools svg { width: 18px; height: 18px; }
.brand { flex: 0 0 63px; display: flex; align-items: center; justify-content: center; background: #000; color: #fff; font-size: 16px; font-weight: 700; }
.brand svg { width: 12px; height: 12px; }

/* Ribbon */
.ribbon { flex: none; display: flex; padding: 4px 0 2px 5px; background: #f9f9f9; }
.group { flex: none; height: 100px; border-left: 1px solid #74747a; }
.group h2 { height: 23px; line-height: 23px; text-align: center; }
.g-mesh { width: 350px; }
.g-zones { width: 337px; }
.g-interfaces { width: 98px; }
.g-models { width: 134px; }
.g-turbo { width: 121px; }
.g-adapt { width: 66px; }
.g-surface { width: 76px; }
.rest { flex: 1; }
.cols { display: flex; padding: 0 10px 0 11px; }
.g-zones .cols { justify-content: space-between; }
.col { display: grid; grid-auto-rows: 26px; width: 78px; }
.col.two { grid-auto-rows: 39px; width: auto; padding-left: 10px; }
.g-zones .col { width: 90px; }
.g-zones .col:last-child { width: 110px; }
.g-zones .col:nth-child(2) { width: 94px; }
.g-models .col { padding-left: 11px; width: auto; }
.col-wide { width: 108px; margin-left: 14px; }
.cmd { display: flex; align-items: center; gap: 4px; text-align: left; }
.cmd svg { width: 18px; height: 18px; }
.two .cmd { gap: 3px; }
.two .cmd svg { width: 20px; height: 20px; }
.cmd .arrow { margin: 7px 0 0 auto; }
.col-wide .arrow { margin-right: 4px; }
.cmd.off { color: #8c8c8c; }
.big { flex: 0 0 67px; display: flex; flex-direction: column; align-items: center; padding-top: 11px; gap: 3px; }
.big svg { width: 38px; height: 38px; }
.big span { position: relative; }
.big .arrow { position: absolute; left: 100%; top: 9px; }
.big .far { margin-left: 6px; }
.menu { display: flex; flex-direction: column; justify-content: flex-end; padding: 0 8px 6px 11px; text-align: left; }
.menu .arrow { align-self: flex-end; margin-top: 30px; }

/* Work area */
.work { flex: 1; min-height: 0; display: flex; background: #fff; padding-top: 2px; }
.panel-head { flex: none; height: 26px; display: flex; align-items: center; justify-content: space-between; padding: 0 2px 0 8px; font-weight: 700; color: #56616e; }
.chev svg { width: 8px; height: 10px; }

.outline { position: relative; flex: 0 0 248px; display: flex; flex-direction: column; background: #e9eded; min-height: 0; }
.strip { flex: none; height: 24px; background: #f4f5f5; border-top: 3px solid #fff; }
.filter { flex: none; height: 29px; margin: 10px 5px 7px 6px; padding: 0 15px; border: 0; border-radius: 15px; background: #fcfcfc; }
.filter::placeholder { color: #777; opacity: 1; }
.tree-area { flex: 1; min-height: 0; display: flex; padding-right: 3px; }
.tree { flex: 1; margin: 0; padding: 0; list-style: none; overflow: hidden; color: #2b2730; }
.tree li { position: relative; display: flex; align-items: center; height: 18px; padding-left: 45px; gap: 5px; white-space: nowrap; }
.tree li.tight { gap: 3px; padding-left: 44px; }
.tree li.top { height: 14px; padding-left: 26px; font-weight: 700; color: #111; }
.tree li.top:first-child { margin-top: 2px; }
.tree li svg { width: 15px; height: 15px; }
.exp { position: absolute; left: 26px; width: 14px; height: 14px; top: 1px; border: 1px solid #a9b0b7; border-radius: 50%; background: #f2f4f5; }
.exp::before, .exp.plus::after { content: ""; position: absolute; left: 3px; top: 5px; width: 6px; height: 2px; background: #555; }
.exp.plus::after { transform: rotate(90deg); }
.top .exp { left: 8px; width: 12px; height: 12px; }
.top .exp::before { left: 3px; top: 4px; width: 4px; }
.vscroll { flex: 0 0 15px; display: flex; flex-direction: column; }
.sbtn { flex: none; display: grid; place-items: center; background: #a9b8be; }
.vscroll .sbtn { height: 18px; }
.vscroll .thumb { flex: 244; background: #747a7b; }
.track { background: #bfcccf; }
.vscroll .track { flex: 101; }
.pointer { position: absolute; left: 235px; top: 205px; width: 12px; height: 18px; }

.task { flex: 0 0 289px; margin-left: 4px; display: flex; flex-direction: column; border: solid #b3bcc4; border-width: 0 1px; background: #f3f3f3; overflow: hidden; }
.task .panel-head { background: #bbc3c7; }
.task-body { flex: 1; width: 340px; padding: 9px 8px 0; }
.task-title { display: flex; align-items: center; height: 27px; }
.task-title h1 { flex: 0 0 257px; color: #111; }
.help { display: grid; place-items: center; width: 27px; height: 25px; border: 1px solid #667; border-radius: 4px; background: #fff; }
.help svg { width: 18px; height: 18px; }
.task h3 { margin-top: 6px; }
.box { border: 1px solid #cdd2d8; }
.buttons { height: 68px; padding: 4px 8px; display: grid; grid-template-columns: repeat(3, 83px); grid-auto-rows: 26px; gap: 3px 4px; }
.buttons button { border: 1px solid #737b84; border-radius: 4px; background: #f8f8f8; }
.task .h-solver { margin-top: 5px; }
.solver { height: 198px; padding: 3px 4px; display: grid; grid-template-columns: 120px 180px; grid-template-rows: 88px 90px; column-gap: 19px; }
.radios { height: 49px; padding: 2px 8px; display: grid; grid-auto-rows: 20px; align-content: start; white-space: nowrap; }
.tall { height: 67px; }
.bare { padding: 1px 7px; border-color: transparent; }
.radios label, .gravity { display: flex; align-items: center; gap: 5px; }
input[type=radio], input[type=checkbox] { appearance: none; flex: none; width: 13px; height: 13px; border: 1px solid #a9adb1; background: #fff; }
input[type=radio] { border-radius: 50%; }
input[type=radio]:checked { background: radial-gradient(circle, #333 3px, #fff 4px); }
.gravity { margin: 9px 0 0 2px; }
.hscroll { flex: 0 0 14px; display: flex; }
.hscroll .sbtn { width: 19px; }
.hscroll .thumb { flex: 236; background: #59606b; }
.hscroll .track { flex: 13; }

/* Graphics window */
.viewer { flex: 1; min-width: 0; display: flex; flex-direction: column; }
.stage { flex: 1; min-height: 0; display: flex; }
.tools { flex: 0 0 45px; display: flex; flex-direction: column; gap: 5px; padding-left: 8px; }
.tools-right { flex-basis: 38px; padding-left: 5px; }
.tools button { flex: none; display: grid; place-items: center; width: 27px; height: 27px; border: 1px solid #98a0aa; border-radius: 4px; background: #fff; }
.tools svg { width: 18px; height: 18px; }
.tools svg.large { width: 22px; height: 22px; }
.tools button.on { background: #dfe2e6; border-color: #b9bec5; }
.tools button.current { width: 31px; height: 31px; border: 3px solid #929ba7; }
.tools button.pill { height: 7px; border-color: #888; }
.tools .pill svg { width: 27px; height: 7px; }
.tools .last { margin-top: 8px; }
.tools .mid { margin-top: 17px; }
.grip { flex: none; width: 16px; height: 10px; margin-left: 8px; background: radial-gradient(circle at 1px 1px, #ccc 1px, transparent 1px) 0 4px / 3px 3px; }
.canvas { position: relative; flex: 1; min-width: 0; background: linear-gradient(#cad1dd, #e1e5ec 45%, #f7f8fa 85%, #fff); }
.plot { position: absolute; inset: 0; width: 100%; height: 418px; }
.canvas-head { position: relative; height: 26px; display: flex; align-items: center; justify-content: space-between; padding: 0 10px 0 4px; }
.canvas-head > svg { width: 16px; height: 16px; }
.canvas-head button svg { width: 10px; height: 10px; }
.logo { position: relative; display: flex; flex-direction: column; align-items: flex-end; padding: 10px 5px 0; color: #111; font-weight: 700; }
.logo-name { display: flex; align-items: center; font-size: 24px; line-height: 28px; }
.logo-name svg { width: 19px; height: 18px; fill: #111; }
.logo-ver { line-height: 12px; }
.status { flex: none; height: 35px; display: flex; align-items: center; justify-content: flex-end; gap: 3px; padding: 5px 5px 0 7px; border-bottom: 1px solid #c3c6ca; }
.vgrip { width: 6px; height: 16px; margin-right: auto; background: radial-gradient(circle at 1px 1px, #ccc 1px, transparent 1px) 0 0 / 3px 3px; }
.select { position: relative; width: 156px; }
.select select { display: block; appearance: none; width: 100%; height: 22px; padding: 0 4px; border: 1px solid #b5b9be; border-radius: 3px; background: #fff; }
.select .arrow { position: absolute; right: 7px; top: 8px; border-width: 5px 5px 0; }
.bottom-tabs { flex: none; display: flex; height: 24px; padding-left: 3px; }
.bottom-tabs button { width: 65px; background: #dcdcdd; border: 1px solid #b9b9bb; }
.bottom-tabs .active { width: 68px; background: #f6f6f6; border-width: 0 1px 0 0; }
```
